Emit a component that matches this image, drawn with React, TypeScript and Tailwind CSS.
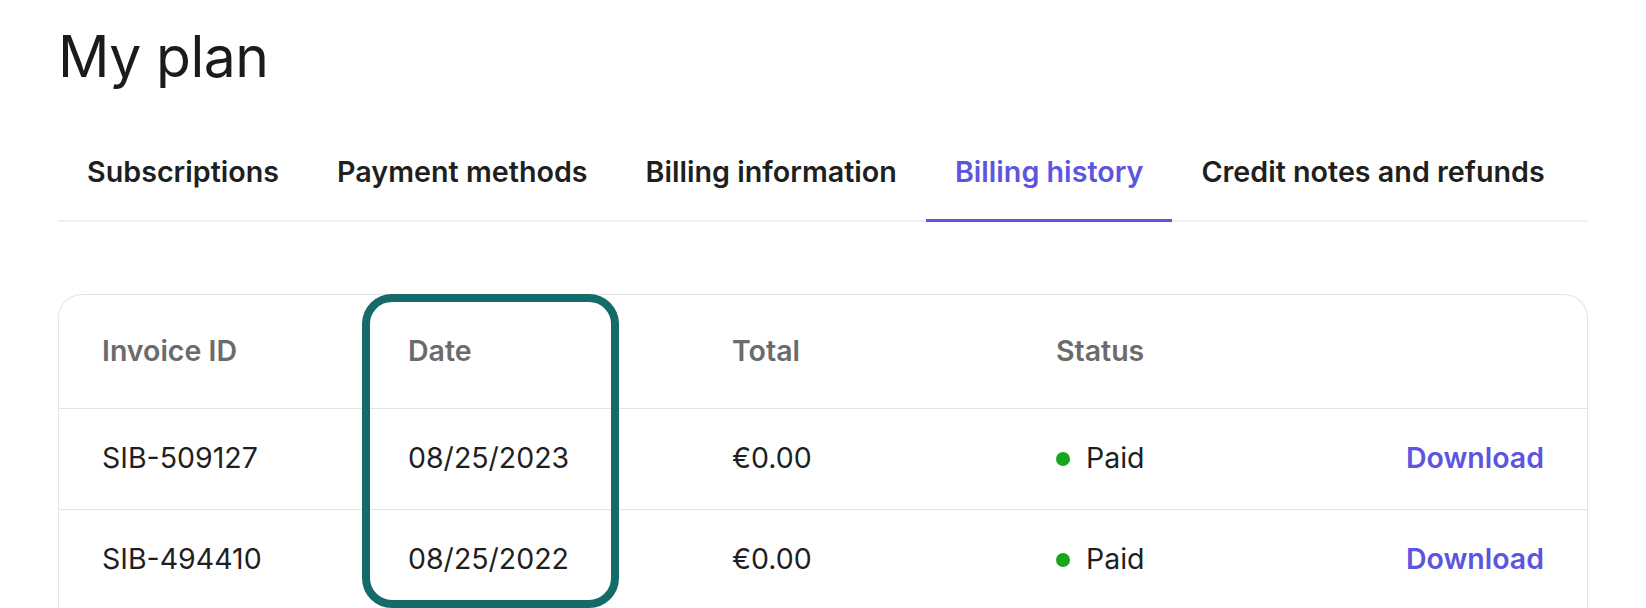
import React from "react";

const tabs = [
  { label: "Subscriptions", active: false },
  { label: "Payment methods", active: false },
  { label: "Billing information", active: false },
  { label: "Billing history", active: true },
  { label: "Credit notes and refunds", active: false },
];

const rows = [
  { id: "SIB-509127", date: "08/25/2023", total: "€0.00", status: "Paid" },
  { id: "SIB-494410", date: "08/25/2022", total: "€0.00", status: "Paid" },
];

export default function App() {
  return (
    <div className="h-screen overflow-hidden bg-white px-[58px] font-['Inter','Noto_Sans',sans-serif] antialiased">
      <h1 className="pt-[28px] text-[57px] leading-none font-normal text-[#1b1b1b] tracking-[-0.01em]">
        My plan
      </h1>

      <nav className="mt-[73px] flex border-b-2 border-[#efefef]">
        {tabs.map((t) => (
          <div
            key={t.label}
            className={`relative px-[29px] pb-[33px] text-[28.7px] leading-none font-semibold whitespace-nowrap ${
              t.active ? "text-[#5d55e0]" : "text-[#1f1f1f]"
            }`}
          >
            {t.label}
            {t.active && (
              <span className="absolute left-0 right-0 -bottom-[2px] h-[3px] bg-[#5d55e0]" />
            )}
          </div>
        ))}
      </nav>

      <div className="relative mt-[72px] h-[330px] rounded-t-[24px] border border-b-0 border-[#e4e4e4]">
        <div className="grid h-[113px] grid-cols-[306px_324px_324px_1fr_auto] items-center px-[43px] text-[28.5px] font-semibold leading-none text-[#6b6b6b]">
          <div>Invoice ID</div>
          <div>Date</div>
          <div>Total</div>
          <div>Status</div>
          <div />
        </div>
        {rows.map((r) => (
          <div
            key={r.id}
            className="grid h-[101px] grid-cols-[306px_324px_324px_1fr_auto] items-center border-t border-[#e4e4e4] px-[43px] text-[28.5px] leading-none text-[#1f1f1f]"
          >
            <div>{r.id}</div>
            <div>{r.date}</div>
            <div>{r.total}</div>
            <div className="flex items-center gap-[16px]">
              <span className="h-[14px] w-[14px] rounded-full bg-[#15a619]" />
              <span>{r.status}</span>
            </div>
            <div className="text-right font-semibold text-[#5d55e0]">Download</div>
          </div>
        ))}

        <div className="pointer-events-none absolute -top-px left-[303px] h-[314px] w-[257px] rounded-[30px] border-[8px] border-[#146b69]" />
      </div>
    </div>
  );
}
